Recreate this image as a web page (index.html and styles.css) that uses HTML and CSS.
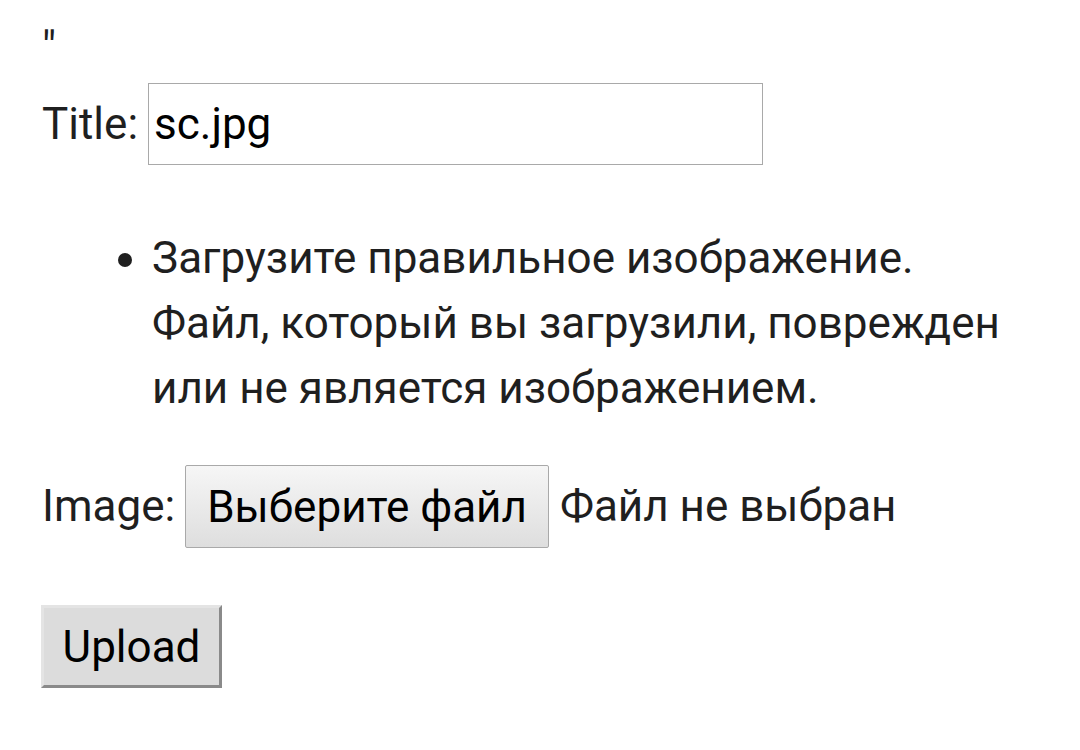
FILE: index.html
```html
<!DOCTYPE html>
<html lang="ru">
<head>
    <meta charset="UTF-8">
    <meta name="viewport" content="width=device-width, initial-scale=1.0">
    <title>Upload</title>
    <link rel="stylesheet" href="styles.css">
</head>
<body>
    <div class="stray">"</div>

    <form class="upload-form">
        <div class="form-row title-row">
            <label for="title">Title:</label>
            <input type="text" id="title" value="sc.jpg">
        </div>

        <ul class="errorlist">
            <li>Загрузите правильное изображение. Файл, который вы загрузили, поврежден или не является изображением.</li>
        </ul>

        <div class="form-row image-row">
            <label for="image">Image:</label>
            <button type="button" class="file-btn" id="image">Выберите файл</button>
            <span class="file-name">Файл не выбран</span>
        </div>

        <button type="submit" class="submit-btn">Upload</button>
    </form>
</body>
</html>
```

FILE: styles.css
```css
body {
    margin: 0;
    padding: 16px 41px 0 41px;
    font-family: Roboto, "Noto Sans", sans-serif;
    font-size: 44px;
    line-height: 65px;
    color: #1f1f1f;
    background-color: #fff;
}

.stray {
    height: 57px;
    padding-left: 1px;
    line-height: 65px;
}

.upload-form {
    margin: 0;
}

.form-row {
    display: flex;
    align-items: center;
}

.form-row label {
    padding-left: 1px;
}

.title-row {
    margin-top: 10px;
    gap: 10px;
}

.title-row input {
    box-sizing: border-box;
    width: 615px;
    height: 82px;
    margin: 0;
    padding: 0 5px;
    border: 1px solid #a9a9a9;
    border-radius: 0;
    font-family: Roboto, "Noto Sans", sans-serif;
    font-size: 44px;
    color: #000;
    outline: none;
}

.errorlist {
    margin: 61px 0 0 0;
    padding-left: 111px;
}

.image-row {
    margin-top: 44px;
    gap: 9px;
}

.file-btn {
    box-sizing: border-box;
    height: 83px;
    margin: 0 0 0 1px;
    padding: 0 21px;
    border: 1px solid #a9a9a9;
    border-radius: 2px;
    background: linear-gradient(#f6f6f6, #dedede);
    font-family: Roboto, "Noto Sans", sans-serif;
    font-size: 44px;
    color: #000;
}

.file-name {
    margin-left: 2px;
    color: #1f1f1f;
}

.submit-btn {
    display: block;
    box-sizing: border-box;
    width: 181px;
    height: 83px;
    margin-top: 57px;
    padding: 0;
    border: 3px solid;
    border-color: #e4e4e4 #8a8a8a #8a8a8a #e4e4e4;
    border-radius: 0;
    background-color: #dcdcdc;
    font-family: Roboto, "Noto Sans", sans-serif;
    font-size: 44px;
    color: #000;
}
```
